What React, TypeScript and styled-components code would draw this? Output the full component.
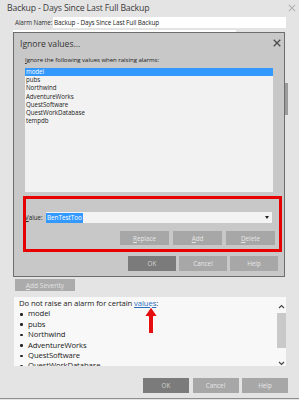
import React from "react";
import styled, { createGlobalStyle } from "styled-components";

const FONT = `"Open Sans", "Noto Sans", "Liberation Sans", sans-serif`;

const Global = createGlobalStyle`
  html, body { margin: 0; padding: 0; }
  body {
    width: 299px; height: 400px; overflow: hidden;
    background: #e4e4e4;
    font-family: ${FONT};
  }
  * { box-sizing: border-box; }
`;

const Window = styled.div`
  position: relative;
  width: 299px;
  height: 400px;
  background: #e4e4e4;
  display: flex;
  flex-direction: column;
  color: #2a2a2a;
`;

const TitleBar = styled.div`
  height: 15px;
  display: flex;
  align-items: center;
  justify-content: space-between;
  padding: 0 3px 0 7px;
`;

const TitleText = styled.span`
  font-size: 8.7px;
  color: #3a3a3a;
  letter-spacing: -0.15px;
  white-space: nowrap;
`;

const AlarmRow = styled.div`
  margin-top: 2px;
  height: 11px;
  display: flex;
  align-items: center;
`;

const AlarmLabel = styled.span`
  width: 53px;
  padding-left: 15px;
  font-size: 6.3px;
  color: #333;
  white-space: nowrap;
  letter-spacing: -0.1px;
`;

const AlarmInput = styled.div`
  width: 233px;
  height: 11px;
  background: #ffffff;
  font-size: 6.4px;
  line-height: 11px;
  padding-left: 1px;
  color: #222;
  white-space: nowrap;
  overflow: hidden;
  letter-spacing: -0.1px;
`;

const Strip = styled.div`
  margin: 2px 0 0 13px;
  width: 223px;
  height: 2px;
  background: #ffffff;
`;

const MainRow = styled.div`
  display: flex;
  height: 245px;
`;

const SideThumb = styled.div`
  margin-top: 51px;
  width: 3px;
  height: 32px;
  background: #9c9c9c;
`;

const Dialog = styled.div`
  position: relative;
  margin-left: 13px;
  width: 272px;
  height: 245px;
  border: 1px solid #6d6d6d;
  background: #c8c8c8;
  display: flex;
  flex-direction: column;
`;

const DialogHead = styled.div`
  height: 20px;
  display: flex;
  align-items: center;
  justify-content: space-between;
  padding: 0 3px 0 6px;
`;

const DialogTitle = styled.span`
  font-size: 8.6px;
  color: #333;
  padding-top: 1px;
`;

const Prompt = styled.div`
  margin-top: 2px;
  height: 10px;
  line-height: 10px;
  padding-left: 11px;
  font-size: 6.1px;
  color: #222;
  white-space: nowrap;
  letter-spacing: -0.05px;
`;

const List = styled.div`
  margin: 3px 11px 0 11px;
  height: 124px;
  background: #f2f2f2;
  display: flex;
  flex-direction: column;
`;

const ListItem = styled.div<{ $selected?: boolean }>`
  height: 8.2px;
  line-height: 8.2px;
  padding-left: 1px;
  font-size: 6.2px;
  white-space: nowrap;
  letter-spacing: -0.05px;
  background: ${(p) => (p.$selected ? "#3399ff" : "transparent")};
  color: ${(p) => (p.$selected ? "#ffffff" : "#222")};
`;

const ValueRow = styled.div`
  margin-top: 20px;
  height: 11px;
  padding: 0 12px 0 11px;
  display: flex;
  align-items: center;
`;

const ValueLabel = styled.span`
  width: 21px;
  font-size: 6.2px;
  color: #222;
`;

const ValueInput = styled.div`
  flex: 1;
  height: 11px;
  background: #f3f3f3;
  display: flex;
  align-items: center;
  justify-content: space-between;
  padding: 0 3px 0 0;
`;

const Selected = styled.span`
  background: #3399ff;
  color: #fff;
  font-size: 6.4px;
  line-height: 10px;
  height: 10px;
  padding: 0 1px;
  letter-spacing: -0.05px;
`;

const Caret = styled.span`
  width: 0;
  height: 0;
  border-left: 2.5px solid transparent;
  border-right: 2.5px solid transparent;
  border-top: 3px solid #222;
`;

const ButtonRow = styled.div<{ $top: number; $h: number; $right: number; $gap: number }>`
  margin-top: ${(p) => p.$top}px;
  height: ${(p) => p.$h}px;
  padding-right: ${(p) => p.$right}px;
  display: flex;
  justify-content: flex-end;
  gap: ${(p) => p.$gap}px;
`;

const Button = styled.div<{ $w: number; $primary?: boolean }>`
  width: ${(p) => p.$w}px;
  height: 100%;
  background: ${(p) => (p.$primary ? "#7b7b7b" : "#a7a7a7")};
  color: ${(p) => (p.$primary ? "#d2d2d2" : "#e6e6e6")};
  font-size: 6.3px;
  display: flex;
  align-items: center;
  justify-content: center;
  white-space: nowrap;
`;

const U = styled.span`
  text-decoration: underline;
`;

const RedBox = styled.div`
  position: absolute;
  left: 9px;
  top: 163px;
  width: 259px;
  height: 56px;
  border: 3px solid #e60000;
  pointer-events: none;
`;

const AddSeverity = styled.div`
  margin: 2px 0 0 15px;
  width: 60px;
  height: 12px;
  background: #ababab;
  color: #e2e2e2;
  font-size: 6.6px;
  display: flex;
  align-items: center;
  justify-content: center;
`;

const Panel = styled.div`
  margin: 6px 0 0 14px;
  width: 272px;
  height: 69px;
  background: #f8f8f8;
  display: flex;
  overflow: hidden;
`;

const PanelBody = styled.div`
  flex: 1;
  padding: 1px 0 0 5px;
  font-size: 7.7px;
  line-height: 10.4px;
  color: #222;
  white-space: nowrap;
  letter-spacing: -0.1px;
`;

const Link = styled.span`
  color: #2a6fbf;
  text-decoration: underline;
`;

const Bullets = styled.ul`
  margin: 0;
  padding: 0;
  list-style: none;
`;

const Bullet = styled.li`
  position: relative;
  padding-left: 9px;
  &::before {
    content: "";
    position: absolute;
    left: 1px;
    top: 4.5px;
    width: 2.6px;
    height: 2.6px;
    border-radius: 50%;
    background: #222;
  }
`;

const ScrollBar = styled.div`
  width: 9px;
  display: flex;
  flex-direction: column;
  align-items: center;
  padding-top: 7px;
`;

const ScrollThumb = styled.div`
  margin-top: 4px;
  width: 9px;
  height: 35px;
  background: #c9c9c9;
`;

const Spacer = styled.div`
  flex: 1;
`;

const BottomLine = styled.div`
  margin-top: 5px;
  height: 1px;
  background: #8e8e8e;
`;

const Arrow = styled.svg`
  position: absolute;
  left: 143px;
  top: 306px;
`;

const XIcon = ({ size, color, w }: { size: number; color: string; w: number }) => (
  <svg width={size} height={size} viewBox="0 0 10 10">
    <path d="M1.5 1.5 L8.5 8.5 M8.5 1.5 L1.5 8.5" stroke={color} strokeWidth={w} strokeLinecap="square" />
  </svg>
);

const Chevron = ({ up }: { up?: boolean }) => (
  <svg width="7" height="5" viewBox="0 0 7 5">
    <path d={up ? "M1 4 L3.5 1.5 L6 4" : "M1 1 L3.5 3.5 L6 1"} stroke="#444" strokeWidth="1.1" fill="none" />
  </svg>
);

const items = ["model", "pubs", "Northwind", "AdventureWorks", "QuestSoftware", "QuestWorkDatabase", "tempdb"];

export default function App() {
  return (
    <>
      <Global />
      <Window>
        <TitleBar>
          <TitleText>Backup - Days Since Last Full Backup</TitleText>
          <XIcon size={8} color="#b0b0b0" w={1.3} />
        </TitleBar>
        <AlarmRow>
          <AlarmLabel>Alarm Name:</AlarmLabel>
          <AlarmInput>Backup - Days Since Last Full Backup</AlarmInput>
        </AlarmRow>
        <Strip />
        <MainRow>
          <Dialog>
            <DialogHead>
              <DialogTitle>Ignore values...</DialogTitle>
              <XIcon size={8} color="#4a4a4a" w={1.6} />
            </DialogHead>
            <Prompt>
              <U>I</U>gnore the following values when raising alarms:
            </Prompt>
            <List>
              {items.map((it, i) => (
                <ListItem key={it} $selected={i === 0}>
                  {it}
                </ListItem>
              ))}
            </List>
            <ValueRow>
              <ValueLabel>
                <U>V</U>alue:
              </ValueLabel>
              <ValueInput>
                <Selected>BenTestToo</Selected>
                <Caret />
              </ValueInput>
            </ValueRow>
            <ButtonRow $top={8} $h={14} $right={9} $gap={4}>
              <Button $w={49}>
                <U>R</U>eplace
              </Button>
              <Button $w={49}>
                <U>A</U>dd
              </Button>
              <Button $w={49}>
                <U>D</U>elete
              </Button>
            </ButtonRow>
            <ButtonRow $top={11} $h={15} $right={6} $gap={3}>
              <Button $w={48} $primary>
                OK
              </Button>
              <Button $w={48}>Cancel</Button>
              <Button $w={48}>Help</Button>
            </ButtonRow>
            <RedBox />
          </Dialog>
          <SideThumb />
        </MainRow>
        <AddSeverity>
          <U>A</U>dd Severity
        </AddSeverity>
        <Panel>
          <PanelBody>
            Do not raise an alarm for certain <Link>values</Link>:
            <Bullets>
              {items.slice(0, 6).map((it) => (
                <Bullet key={it}>{it}</Bullet>
              ))}
            </Bullets>
          </PanelBody>
          <ScrollBar>
            <Chevron up />
            <ScrollThumb />
            <Spacer />
            <Chevron />
          </ScrollBar>
        </Panel>
        <ButtonRow $top={12} $h={15} $right={11} $gap={3.5}>
          <Button $w={46} $primary>
            OK
          </Button>
          <Button $w={46}>Cancel</Button>
          <Button $w={46}>Help</Button>
        </ButtonRow>
        <BottomLine />
        <Arrow width="16" height="29" viewBox="0 0 16 29">
          <path
            d="M8 1 L14.5 10.5 L10.5 10.5 L10.5 27.5 L5.5 27.5 L5.5 10.5 L1.5 10.5 Z"
            fill="#e50f0f"
            stroke="#ffffff"
            strokeWidth="1"
            strokeLinejoin="round"
          />
        </Arrow>
      </Window>
    </>
  );
}
